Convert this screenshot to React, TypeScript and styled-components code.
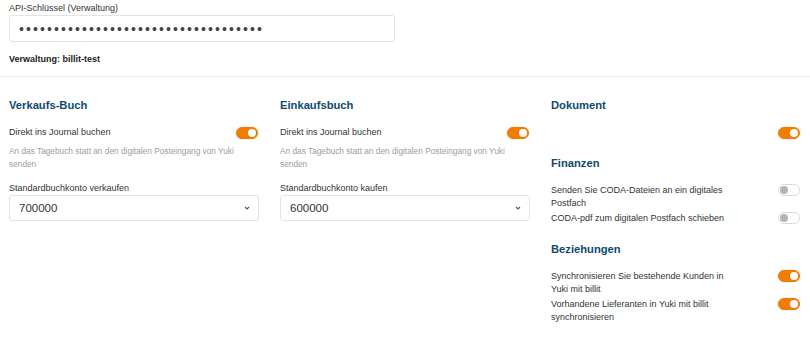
import { createGlobalStyle } from "styled-components";
import styled from "styled-components";

const GlobalStyle = createGlobalStyle`
  body {
    margin: 0;
    background: #fff;
    font-family: "Liberation Sans", Arial, sans-serif;
    color: #333;
  }
`;

type ToggleRow = { label: string; on: boolean };

const finanzen: ToggleRow[] = [
  { label: "Senden Sie CODA-Dateien an ein digitales Postfach", on: false },
  { label: "CODA-pdf zum digitalen Postfach schieben", on: false },
];

const beziehungen: ToggleRow[] = [
  { label: "Synchronisieren Sie bestehende Kunden in Yuki mit billit", on: true },
  { label: "Vorhandene Lieferanten in Yuki mit billit synchronisieren", on: true },
];

function Switch({ on }: { on: boolean }) {
  return (
    <Track $on={on}>
      <Knob $on={on} />
    </Track>
  );
}

function BookColumn({ title, account, accountLabel }: { title: string; account: string; accountLabel: string }) {
  return (
    <Column>
      <Heading>{title}</Heading>
      <SwitchLine>
        <Label>Direkt ins Journal buchen</Label>
        <Switch on={true} />
      </SwitchLine>
      <Hint>An das Tagebuch statt an den digitalen Posteingang von Yuki senden</Hint>
      <FieldLabel>{accountLabel}</FieldLabel>
      <Select>
        <span>{account}</span>
        <Chevron viewBox="0 0 10 10">
          <path d="M3 4l2 2 2-2" fill="none" stroke="#555" strokeWidth="1.1" />
        </Chevron>
      </Select>
    </Column>
  );
}

function App() {
  return (
    <>
      <GlobalStyle />
      <Page>
        <Top>
          <FieldLabel>API-Schlüssel (Verwaltung)</FieldLabel>
          <KeyInput type="password" readOnly value={"x".repeat(35)} />
          <Account>Verwaltung: billit-test</Account>
        </Top>
        <Columns>
          <BookColumn title="Verkaufs-Buch" accountLabel="Standardbuchkonto verkaufen" account="700000" />
          <BookColumn title="Einkaufsbuch" accountLabel="Standardbuchkonto kaufen" account="600000" />
          <Column>
            <Heading>Dokument</Heading>
            <SwitchLine>
              <Label />
              <Switch on={true} />
            </SwitchLine>
            <Heading $spaced>Finanzen</Heading>
            <List>
              {finanzen.map((r) => (
                <ListRow key={r.label}>
                  <Label>{r.label}</Label>
                  <Switch on={r.on} />
                </ListRow>
              ))}
            </List>
            <Heading $spaced>Beziehungen</Heading>
            <List>
              {beziehungen.map((r) => (
                <ListRow key={r.label}>
                  <Label>{r.label}</Label>
                  <Switch on={r.on} />
                </ListRow>
              ))}
            </List>
          </Column>
        </Columns>
      </Page>
    </>
  );
}

const Page = styled.div`
  width: 810px;
`;

const Top = styled.div`
  padding: 3px 9px 0;
  border-bottom: 1px solid #ececec;
  height: 77px;
  box-sizing: border-box;
`;

const FieldLabel = styled.div`
  font-size: 9px;
  line-height: 11px;
  color: #333;
  margin-bottom: 1px;
`;

const KeyInput = styled.input`
  display: block;
  width: 386px;
  height: 27px;
  box-sizing: border-box;
  margin-top: 1px;
  border: 1px solid #e3e3e3;
  border-radius: 3px;
  padding: 0 9px;
  font-family: "Liberation Sans", Arial, sans-serif;
  font-size: 14px;
  letter-spacing: 2.1px;
  color: #444;
  outline: none;
`;

const Account = styled.div`
  margin-top: 12px;
  font-size: 9px;
  font-weight: bold;
  color: #222;
`;

const Columns = styled.div`
  display: grid;
  grid-template-columns: repeat(3, 250px);
  column-gap: 21px;
  padding: 21px 9px 0;
`;

const Column = styled.div`
  display: flex;
  flex-direction: column;
`;

const Heading = styled.div<{ $spaced?: boolean }>`
  font-size: 11.2px;
  font-weight: bold;
  color: #0d4a6e;
  line-height: 14px;
  margin-top: ${(p) => (p.$spaced ? "17px" : "0")};
  margin-bottom: 14px;
`;

const SwitchLine = styled.div`
  display: flex;
  justify-content: space-between;
  align-items: center;
  height: 13px;
  padding-right: 1px;
`;

const Label = styled.div`
  font-size: 9px;
  line-height: 13px;
  color: #333;
  max-width: 185px;
`;

const Hint = styled.div`
  margin-top: 6px;
  font-size: 8.3px;
  line-height: 13px;
  color: #9d9d9d;
  max-width: 236px;
  margin-bottom: 12px;
`;

const Select = styled.div`
  display: flex;
  align-items: center;
  justify-content: space-between;
  height: 26px;
  box-sizing: border-box;
  margin-top: 0;
  border: 1px solid #e3e3e3;
  border-radius: 3px;
  padding: 0 6px 0 9px;
  font-size: 11.5px;
  color: #333;
`;

const Chevron = styled.svg`
  width: 10px;
  height: 10px;
`;

const List = styled.div`
  display: flex;
  flex-direction: column;
  gap: 2px;
`;

const ListRow = styled.div`
  display: flex;
  justify-content: space-between;
  align-items: flex-start;
  padding-right: 1px;
`;

const Track = styled.div<{ $on: boolean }>`
  position: relative;
  flex: none;
  width: 22px;
  height: 12px;
  box-sizing: border-box;
  border-radius: 6px;
  background: ${(p) => (p.$on ? "#f07c00" : "#fff")};
  border: 1px solid ${(p) => (p.$on ? "#f07c00" : "#dcdcdc")};
  box-shadow: 0 0 0 1px ${(p) => (p.$on ? "#f3f3f3" : "transparent")};
`;

const Knob = styled.div<{ $on: boolean }>`
  position: absolute;
  top: 1px;
  left: ${(p) => (p.$on ? "11px" : "1px")};
  width: 8px;
  height: 8px;
  border-radius: 50%;
  background: ${(p) => (p.$on ? "#fff" : "#adb5bd")};
`;

export default App;
